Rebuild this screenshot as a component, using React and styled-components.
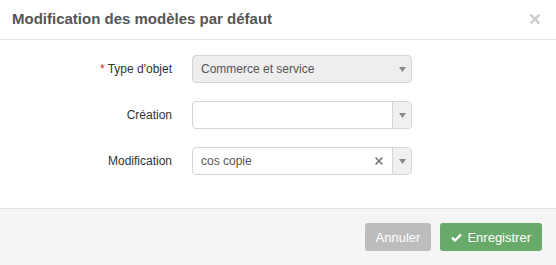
import React from "react";
import styled, { createGlobalStyle } from "styled-components";

const Global = createGlobalStyle`
  html, body { margin: 0; padding: 0; background: #fff; }
  body { font-family: "Liberation Sans", Arial, sans-serif; color: #333; }
  * { box-sizing: border-box; }
`;

const Modal = styled.div`
  width: 556px;
  height: 265px;
  display: flex;
  flex-direction: column;
  background: #fff;
`;

const Header = styled.div`
  height: 40px;
  border-bottom: 1px solid #e5e5e5;
  display: flex;
  align-items: center;
  justify-content: space-between;
  padding: 0 16px 2px 12px;
`;

const Title = styled.h4`
  margin: 0;
  font-size: 15px;
  font-weight: bold;
  color: #555;
`;

const Close = styled.button`
  border: 0;
  background: none;
  padding: 0;
  display: flex;
  cursor: pointer;
`;

const Body = styled.div`
  flex: 1;
  padding-top: 15px;
  display: flex;
  flex-direction: column;
  gap: 18px;
`;

const Row = styled.div`
  display: grid;
  grid-template-columns: 172px 220px;
  column-gap: 20px;
  align-items: center;
`;

const Label = styled.label`
  text-align: right;
  font-size: 12px;
  color: #333;
`;

const Req = styled.span`
  color: #e02020;
  margin-right: 3px;
`;

const Select = styled.div`
  height: 28px;
  border: 1px solid #d5d5d5;
  border-radius: 4px;
  background: ${(p) => (p.$disabled ? "#eeeeee" : "#fff")};
  display: flex;
  align-items: stretch;
  overflow: hidden;
`;

const Value = styled.div`
  flex: 1;
  display: flex;
  align-items: center;
  padding-left: 8px;
  font-size: 12px;
  color: #555;
`;

const Clear = styled.span`
  display: flex;
  align-items: center;
  padding: 0 9px 0 4px;
`;

const Arrow = styled.span`
  width: 19px;
  display: flex;
  align-items: center;
  justify-content: center;
  background: ${(p) => (p.$plain ? "transparent" : "#f0f0f0")};
  border-left: 1px solid ${(p) => (p.$plain ? "transparent" : "#d5d5d5")};
`;

const Footer = styled.div`
  height: 57px;
  border-top: 1px solid #e2e2e2;
  background: #f4f4f4;
  display: flex;
  justify-content: flex-end;
  align-items: flex-start;
  padding: 14px 14px 0 0;
  gap: 9px;
`;

const Button = styled.button`
  height: 28px;
  border: 0;
  border-radius: 3px;
  padding: 0 11px;
  font-family: "Liberation Sans", Arial, sans-serif;
  font-size: 13px;
  color: #fff;
  background: ${(p) => (p.$primary ? "#68aa6a" : "#bcbcbc")};
  display: flex;
  align-items: center;
  gap: 5px;
  cursor: pointer;
`;

const Tri = () => (
  <svg width="7" height="5" viewBox="0 0 7 5">
    <path d="M0 0H7L3.5 5Z" fill="#8a8a8a" />
  </svg>
);

const XIcon = ({ size, stroke, color }) => (
  <svg width={size} height={size} viewBox="0 0 10 10">
    <path d="M1.5 1.5L8.5 8.5M8.5 1.5L1.5 8.5" stroke={color} strokeWidth={stroke} strokeLinecap="square" />
  </svg>
);

const Check = () => (
  <svg width="11" height="9" viewBox="0 0 11 9">
    <path d="M1 4.6L4 7.5L10 1.5" stroke="#fff" strokeWidth="2.4" fill="none" />
  </svg>
);

export default function App() {
  return (
    <>
      <Global />
      <Modal>
        <Header>
          <Title>Modification des modèles par défaut</Title>
          <Close aria-label="Fermer">
            <XIcon size={10} stroke={2.4} color="#cccccc" />
          </Close>
        </Header>
        <Body>
          <Row>
            <Label><Req>*</Req>Type d'objet</Label>
            <Select $disabled>
              <Value>Commerce et service</Value>
              <Arrow $plain><Tri /></Arrow>
            </Select>
          </Row>
          <Row>
            <Label>Création</Label>
            <Select>
              <Value />
              <Arrow><Tri /></Arrow>
            </Select>
          </Row>
          <Row>
            <Label>Modification</Label>
            <Select>
              <Value>cos copie</Value>
              <Clear><XIcon size={8} stroke={2} color="#777" /></Clear>
              <Arrow><Tri /></Arrow>
            </Select>
          </Row>
        </Body>
        <Footer>
          <Button>Annuler</Button>
          <Button $primary><Check />Enregistrer</Button>
        </Footer>
      </Modal>
    </>
  );
}
